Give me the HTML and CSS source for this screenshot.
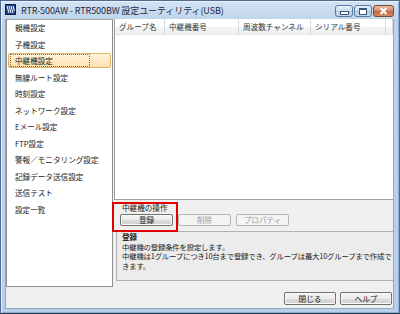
FILE: index.html
```html
<!DOCTYPE html>
<html lang="ja">
<head>
<meta charset="utf-8">
<title>RTR-500AW - RTR500BW 設定ユーティリティ(USB)</title>
<link rel="stylesheet" href="styles.css">
</head>
<body>
<div class="window">
  <div class="titlebar">
    <svg class="app-icon" width="11" height="11" viewBox="0 0 11 11">
      <rect x="0.5" y="0.5" width="10" height="10" fill="#1d3f8a" stroke="#0c1f4d"/>
      <path d="M2 2 L4 9 M4 2 L6 9 M6 2 L8 9 M8 2 L9.5 7" stroke="#ffffff" stroke-width="1"/>
    </svg>
    <span class="title">RTR-500AW - RTR500BW 設定ユーティリティ(USB)</span>
    <div class="caption">
      <span class="cbtn cmin"><span class="g-min"></span></span>
      <span class="cbtn cmax"><span class="g-max"></span></span>
      <span class="cbtn cclose">
        <svg width="9" height="8" viewBox="0 0 9 8"><path d="M1.5 1 L7.5 7 M7.5 1 L1.5 7" stroke="#ffffff" stroke-width="2"/></svg>
      </span>
    </div>
  </div>
  <div class="client">
    <div class="main">
      <ul class="nav">
        <li>親機設定</li>
        <li>子機設定</li>
        <li class="selected"><span class="focus">中継機設定</span></li>
        <li>無線ルート設定</li>
        <li>時刻設定</li>
        <li>ネットワーク設定</li>
        <li>Eメール設定</li>
        <li>FTP設定</li>
        <li>警報／モニタリング設定</li>
        <li>記録データ送信設定</li>
        <li>送信テスト</li>
        <li>設定一覧</li>
      </ul>
      <div class="right">
        <div class="listview">
          <div class="lv-header">
            <span class="col c1">グループ名</span>
            <span class="col c2">中継機番号</span>
            <span class="col c3">周波数チャンネル</span>
            <span class="col c4">シリアル番号</span>
            <span class="col c5"></span>
          </div>
          <div class="lv-body"></div>
        </div>
        <div class="ops">
          <div class="ops-label">中継機の操作</div>
          <div class="ops-buttons">
            <button class="btn">登録</button>
            <button class="btn" disabled>削除</button>
            <button class="btn" disabled>プロパティ</button>
          </div>
          <div class="annot"></div>
        </div>
        <div class="desc">
          <div class="desc-title">登録</div>
          <div class="desc-line">中継機の登録条件を設定します。</div>
          <div class="desc-line">中継機は1グループにつき10台まで登録でき、グループは最大10グループまで作成で</div>
          <div class="desc-line">きます。</div>
        </div>
      </div>
    </div>
    <div class="footer">
      <button class="btn wide">閉じる</button>
      <button class="btn wide">ヘルプ</button>
    </div>
  </div>
</div>
</body>
</html>
```
FILE: styles.css
```css
* { box-sizing: border-box; }
html, body { margin: 0; padding: 0; }
body {
  width: 400px;
  height: 314px;
  overflow: hidden;
  font-family: "Noto Sans CJK JP", "Noto Sans", sans-serif;
  color: #1a1a1a;
}
.window {
  width: 400px;
  height: 314px;
  display: flex;
  flex-direction: column;
  background: linear-gradient(to bottom, #d3e2f3 0px, #bed3ea 20px, #b9cfe8 100%);
  border: 1px solid #4f6b8e;
  border-bottom-color: #1f3350;
  box-shadow: inset 1px 1px 0 #e8f1fb, inset -1px -1px 0 #8fb0d6;
}
.titlebar {
  height: 18px;
  display: flex;
  align-items: center;
  padding-left: 4px;
  flex: none;
}
.app-icon { flex: none; margin-top: -1px; }
.title {
  margin-left: 5px;
  font-size: 9px;
  color: #1b2a44;
  white-space: nowrap;
  letter-spacing: -0.1px;
}
.caption {
  margin-left: auto;
  margin-right: 5px;
  display: flex;
  gap: 1px;
  align-self: flex-start;
  margin-top: 4px;
}
.cbtn {
  height: 12px;
  border: 1px solid #5a7aa3;
  border-radius: 3px;
  background: linear-gradient(to bottom, #e9f1fa 0%, #c9dbef 50%, #b3cae6 51%, #c7daef 100%);
  display: flex;
  align-items: center;
  justify-content: center;
}
.cmin, .cmax { width: 18px; }
.cclose {
  width: 21px;
  border-color: #7a4a35;
  background: linear-gradient(to bottom, #e8b9a0 0%, #d08a6a 50%, #c0653f 51%, #d48a68 100%);
}
.g-min {
  width: 7px; height: 2px;
  background: #ffffff;
  border: 1px solid #3b5677;
  box-sizing: content-box;
  margin-top: 4px;
}
.g-max {
  width: 6px; height: 4px;
  border: 1px solid #3b5677;
  border-top-width: 2px;
  background: #ffffff;
  box-sizing: content-box;
}
.client {
  flex: 1;
  margin: 0 5px 4px 4px;
  background: #f0f0f0;
  display: flex;
  flex-direction: column;
  border: 1px solid #92a9c6;
  border-top: none;
}
.main {
  height: 268px;
  display: flex;
  flex: none;
}
.nav {
  list-style: none;
  margin: 0;
  padding: 0 1px;
  width: 107px;
  background: #ffffff;
  border: 1px solid #8f8f8f;
  border-top-color: #a0a0a0;
  flex: none;
}
.nav li {
  height: 16.5px;
  padding-left: 6px;
  font-size: 7.6px;
  line-height: 14.5px;
  border: 1px solid transparent;
  white-space: nowrap;
  color: #1a1a1a;
}
.nav li.selected {
  border-color: #e0b467;
  border-radius: 2px;
  background: linear-gradient(to bottom, #fff3dc, #fde2ad);
  height: 15px;
  margin-bottom: 1.5px;
  padding-left: 1px;
  line-height: 12px;
}
.nav li.selected .focus {
  display: block;
  border: 1px dotted #8a6a30;
  padding-left: 4px;
  height: 13px;
  width: 80px;
}
.right {
  flex: 1;
  margin-left: 1px;
  display: flex;
  flex-direction: column;
  position: relative;
  min-width: 0;
}
.listview {
  height: 181px;
  background: #ffffff;
  border: 1px solid #a0a0a0;
  border-top: none;
  border-right: none;
  display: flex;
  flex-direction: column;
}
.lv-header {
  height: 16px;
  display: flex;
  background: linear-gradient(to bottom, #ffffff 0%, #ffffff 50%, #f3f4f6 51%, #eef0f2 100%);
  border-bottom: 1px solid #e2e4e7;
  flex: none;
}
.col {
  font-size: 7.6px;
  line-height: 15px;
  padding-left: 4px;
  color: #333333;
  border-right: 1px solid #d9dadc;
  white-space: nowrap;
  overflow: hidden;
}
.c1 { width: 50px; }
.c2 { width: 74px; }
.c3 { width: 72px; }
.c4 { width: 75px; }
.c5 { flex: 1; }
.lv-body { flex: 1; }
.ops {
  height: 31px;
  padding: 3px 0 0 6px;
  position: relative;
  flex: none;
}
.ops-label {
  font-size: 7.6px;
  line-height: 10px;
  padding-left: 2px;
}
.ops-buttons {
  display: flex;
  gap: 5px;
  margin-top: 1px;
}
.btn {
  font-family: "Noto Sans CJK JP", "Noto Sans", sans-serif;
  font-size: 7.6px;
  height: 12px;
  width: 53px;
  padding: 0;
  line-height: 10px;
  color: #1a1a1a;
  border: 1px solid #707070;
  border-radius: 2px;
  background: linear-gradient(to bottom, #f4f4f4 0%, #ebebeb 50%, #dddddd 51%, #cfcfcf 100%);
  box-shadow: inset 0 0 0 1px #fbfbfb;
}
.btn:disabled {
  color: #9a9a9a;
  border-color: #b5b5b5;
  background: #f4f4f4;
  box-shadow: none;
}
.annot {
  position: absolute;
  left: -2px;
  top: 2px;
  width: 66px;
  height: 30px;
  border: 2px solid #e00000;
}
.desc {
  height: 50px;
  margin-left: 2px;
  background: #ececec;
  border: 1px solid #b2b2b2;
  border-right: none;
  padding: 0 0 0 5px;
  overflow: hidden;
  white-space: nowrap;
  flex: none;
}
.desc-title {
  font-size: 7.6px;
  font-weight: bold;
  line-height: 9.5px;
}
.desc-line {
  font-size: 7.4px;
  line-height: 9.5px;
  letter-spacing: -0.2px;
}
.footer {
  flex: 1;
  display: flex;
  justify-content: flex-end;
  align-items: flex-start;
  gap: 4px;
  padding: 5px 1px 0 0;
}
.btn.wide { width: 52px; height: 13px; }
```
